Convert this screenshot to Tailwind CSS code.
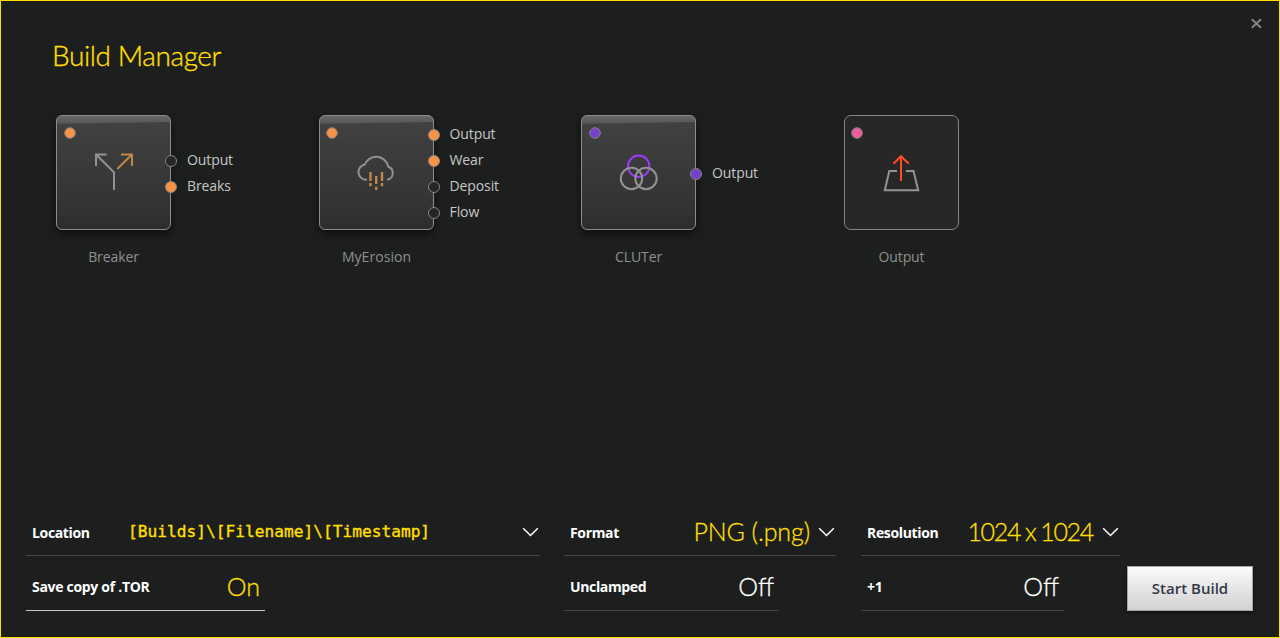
<!DOCTYPE html>
<html lang="en">
<head>
<meta charset="utf-8">
<title>Build Manager</title>
<script src="https://cdn.jsdelivr.net/npm/@tailwindcss/browser@4"></script>
</head>
<body class="bg-[#1d1f1e] font-['Open_Sans',sans-serif]">
<svg class="absolute size-0">
  <defs>
    <linearGradient id="body" x1="0" y1="0" x2="0" y2="1"><stop offset="0" stop-color="#424242"/><stop offset=".85" stop-color="#323232"/><stop offset="1" stop-color="#2c2c2c"/></linearGradient>
    <linearGradient id="cap" x1="0" y1="0" x2="0" y2="1"><stop offset="0" stop-color="#676767"/><stop offset="1" stop-color="#575757"/></linearGradient>
  </defs>
</svg>
<div class="relative flex h-[638px] w-[1280px] flex-col overflow-hidden border border-[#ffdf00]">
  <button class="absolute top-[17px] right-[16px] p-0" aria-label="Close">
    <svg class="block" width="13" height="11" viewBox="0 0 13 11" fill="none" stroke="#858585" stroke-width="2"><path d="M1.8 1.3L11 9.7M11 1.3L1.8 9.7"/></svg>
  </button>
  <h1 class="mt-[36px] ml-[51px] h-[78px] text-[28px] leading-[36px] font-light tracking-[-0.4px] whitespace-nowrap text-[#ffdf00] font-[Lato,sans-serif] [-webkit-text-stroke:0.35px]">Build Manager</h1>

  <main class="grid h-[386px] grid-cols-[263px_262px_263px_115px] pl-[55px] text-[14px] tracking-[-0.1px] text-[#c6c6c6]">
    <section class="w-[115px]">
      <div class="relative h-[115px] w-[115px] rounded-[6px] shadow-[0_4px_8px_rgba(0,0,0,0.55)]">
        <svg class="block" width="115" height="115" viewBox="0 0 115 115" fill="none">
          <rect x=".5" y=".5" width="114" height="114" rx="5.5" fill="url(#body)"/>
          <path d="M1 8.7V6Q1 1 6 1H109Q114 1 114 6V7Z" fill="url(#cap)"/>
          <rect x=".5" y=".5" width="114" height="114" rx="5.5" stroke="#8c8c8c"/>
          <circle cx="14" cy="18" r="5.3" fill="#fa9246" stroke="#858585"/>
          <path d="M50.5 39.5H40V51M40.3 39.8L58 57.3V75" stroke="#929292" stroke-width="2"/>
          <path d="M65 39.5H76V51M75.7 39.8L61.3 54" stroke="#c1874a" stroke-width="2"/>
        </svg>
        <ul class="absolute top-[32px] left-[109px] leading-[26px]">
          <li class="flex items-center gap-[10px]"><i class="mt-[2px] size-3 rounded-full border border-[#858585] bg-[#262626]"></i>Output</li>
          <li class="flex items-center gap-[10px]"><i class="mt-[2px] size-3 rounded-full border border-[#858585] bg-[#fa9246]"></i>Breaks</li>
        </ul>
      </div>
      <p class="mt-[17px] text-center leading-5 text-[#8f8f8f]">Breaker</p>
    </section>

    <section class="w-[115px]">
      <div class="relative h-[115px] w-[115px] rounded-[6px] shadow-[0_4px_8px_rgba(0,0,0,0.55)]">
        <svg class="block" width="115" height="115" viewBox="0 0 115 115" fill="none">
          <rect x=".5" y=".5" width="114" height="114" rx="5.5" fill="url(#body)"/>
          <path d="M1 8.7V6Q1 1 6 1H109Q114 1 114 6V7Z" fill="url(#cap)"/>
          <rect x=".5" y=".5" width="114" height="114" rx="5.5" stroke="#8c8c8c"/>
          <circle cx="13" cy="18" r="5.3" fill="#fa9246" stroke="#858585"/>
          <path d="M48 64.8H46.5A7.8 7.8 0 0 1 45.7 49.4A12.4 12.4 0 0 1 69.3 51.7A6.8 6.8 0 0 1 68 64.8" stroke="#929292" stroke-width="2"/>
          <path d="M51.5 57V66M51.5 68V71.3M57.2 61V69M57.2 71.7V75M63 57V66M63 68V71.3" stroke="#c1874a" stroke-width="2.4"/>
        </svg>
        <ul class="absolute top-[6px] left-[109px] leading-[26px]">
          <li class="flex items-center gap-[9.5px]"><i class="mt-[2px] size-3 rounded-full border border-[#858585] bg-[#fa9246]"></i>Output</li>
          <li class="flex items-center gap-[9.5px]"><i class="mt-[2px] size-3 rounded-full border border-[#858585] bg-[#fa9246]"></i>Wear</li>
          <li class="flex items-center gap-[9.5px]"><i class="mt-[2px] size-3 rounded-full border border-[#858585] bg-[#262626]"></i>Deposit</li>
          <li class="flex items-center gap-[9.5px]"><i class="mt-[2px] size-3 rounded-full border border-[#858585] bg-[#262626]"></i>Flow</li>
        </ul>
      </div>
      <p class="mt-[17px] text-center leading-5 tracking-[0.05px] text-[#8f8f8f]">MyErosion</p>
    </section>

    <section class="w-[115px]">
      <div class="relative h-[115px] w-[115px] rounded-[6px] shadow-[0_4px_8px_rgba(0,0,0,0.55)]">
        <svg class="block" width="115" height="115" viewBox="0 0 115 115" fill="none">
          <rect x=".5" y=".5" width="114" height="114" rx="5.5" fill="url(#body)"/>
          <path d="M1 8.7V6Q1 1 6 1H109Q114 1 114 6V7Z" fill="url(#cap)"/>
          <rect x=".5" y=".5" width="114" height="114" rx="5.5" stroke="#8c8c8c"/>
          <circle cx="14" cy="18" r="5.3" fill="#7441cb" stroke="#858585"/>
          <circle cx="57.7" cy="51.3" r="10.7" stroke="#9a3cf5" stroke-width="2"/>
          <g stroke="#929292" stroke-width="2"><circle cx="50.5" cy="63.5" r="10.7"/><circle cx="65" cy="63.5" r="10.7"/></g>
        </svg>
        <ul class="absolute top-[45px] left-[109px] leading-[26px]">
          <li class="flex items-center gap-[10px]"><i class="mt-[2px] size-3 rounded-full border border-[#858585] bg-[#7441cb]"></i>Output</li>
        </ul>
      </div>
      <p class="mt-[17px] text-center leading-5 text-[#8f8f8f]">CLUTer</p>
    </section>

    <section class="w-[115px]">
      <svg class="block" width="115" height="115" viewBox="0 0 115 115" fill="none">
        <rect x=".5" y=".5" width="114" height="114" rx="6.5" fill="#272727" stroke="#858585"/>
        <circle cx="13" cy="18" r="5.3" fill="#f05c9e" stroke="#858585"/>
        <path d="M53 56H45.3L40.8 75.3H74.2L69.5 56H62" stroke="#929292" stroke-width="2"/>
        <path d="M57 66V41M49.5 48.7L57 41.2L64.8 48.7" stroke="#ff4a26" stroke-width="2"/>
      </svg>
      <p class="mt-[17px] text-center leading-5 text-[#8f8f8f]">Output</p>
    </section>
  </main>

  <footer class="grid grid-cols-[514px_273px_259px_auto] gap-x-[24px] pt-[10px] pl-[25px] text-[14px] font-bold tracking-[-0.35px] text-white">
    <div class="flex h-[45px] items-center border-b border-[#454545] pb-[2px] pl-[6px]">
      <span class="w-[96px]">Location</span>
      <span class="font-['DejaVu_Sans_Mono',monospace] text-[16.2px] font-normal tracking-normal text-[#ffdf00] [-webkit-text-stroke:0.35px]">[Builds]\[Filename]\[Timestamp]</span>
      <svg class="mr-px ml-auto" width="17" height="10" viewBox="0 0 17 10" fill="none" stroke="white" stroke-width="1.5"><path d="M1.2 1.2L8.5 8.5L15.8 1.2"/></svg>
    </div>
    <div class="flex h-[45px] w-[272px] items-center border-b border-[#454545] pb-[2px] pl-[6px]">
      <span>Format</span>
      <span class="ml-auto text-[25px] font-light tracking-[-0.1px] text-[#ffdf00] font-[Lato,sans-serif] [-webkit-text-stroke:0.3px]">PNG (.png)</span>
      <svg class="mr-px ml-[8px]" width="17" height="10" viewBox="0 0 17 10" fill="none" stroke="white" stroke-width="1.5"><path d="M1.2 1.2L8.5 8.5L15.8 1.2"/></svg>
    </div>
    <div class="flex h-[45px] items-center border-b border-[#454545] pb-[2px] pl-[6px]">
      <span>Resolution</span>
      <span class="ml-auto text-[25px] font-light tracking-[-1.3px] [word-spacing:-0.7px] text-[#ffdf00] font-[Lato,sans-serif] [-webkit-text-stroke:0.3px]">1024 x 1024</span>
      <svg class="mr-px ml-[9px]" width="17" height="10" viewBox="0 0 17 10" fill="none" stroke="white" stroke-width="1.5"><path d="M1.2 1.2L8.5 8.5L15.8 1.2"/></svg>
    </div>
    <div></div>
    <div class="mt-[9px] flex h-[46px] w-[239px] items-center justify-between border-b border-[#c8c8c8] pr-[5px] pb-[2px] pl-[6px]">
      <span class="tracking-[-0.3px]">Save copy of .TOR</span>
      <span class="text-[25px] font-light tracking-normal text-[#ffdf00] font-[Lato,sans-serif] [-webkit-text-stroke:0.3px]">On</span>
    </div>
    <div class="mt-[9px] flex h-[46px] w-[215px] items-center justify-between border-b border-[#454545] pr-[5px] pb-[2px] pl-[6px]">
      <span>Unclamped</span>
      <span class="text-[25px] font-light tracking-normal font-[Lato,sans-serif] [-webkit-text-stroke:0.3px]">Off</span>
    </div>
    <div class="mt-[9px] flex h-[46px] w-[203px] items-center justify-between border-b border-[#454545] pr-[5px] pb-[2px] pl-[6px]">
      <span>+1</span>
      <span class="text-[25px] font-light tracking-normal font-[Lato,sans-serif] [-webkit-text-stroke:0.3px]">Off</span>
    </div>
    <button class="mt-[10px] -ml-[17px] h-[45px] w-[126px] border border-[#a5a5a5] bg-linear-to-b from-[#fafafa] to-[#d2d2d2] text-[15px] font-semibold tracking-normal text-[#333849] shadow-[0_2px_4px_rgba(0,0,0,0.5)]">Start Build</button>
  </footer>
</div>
</body>
</html>
